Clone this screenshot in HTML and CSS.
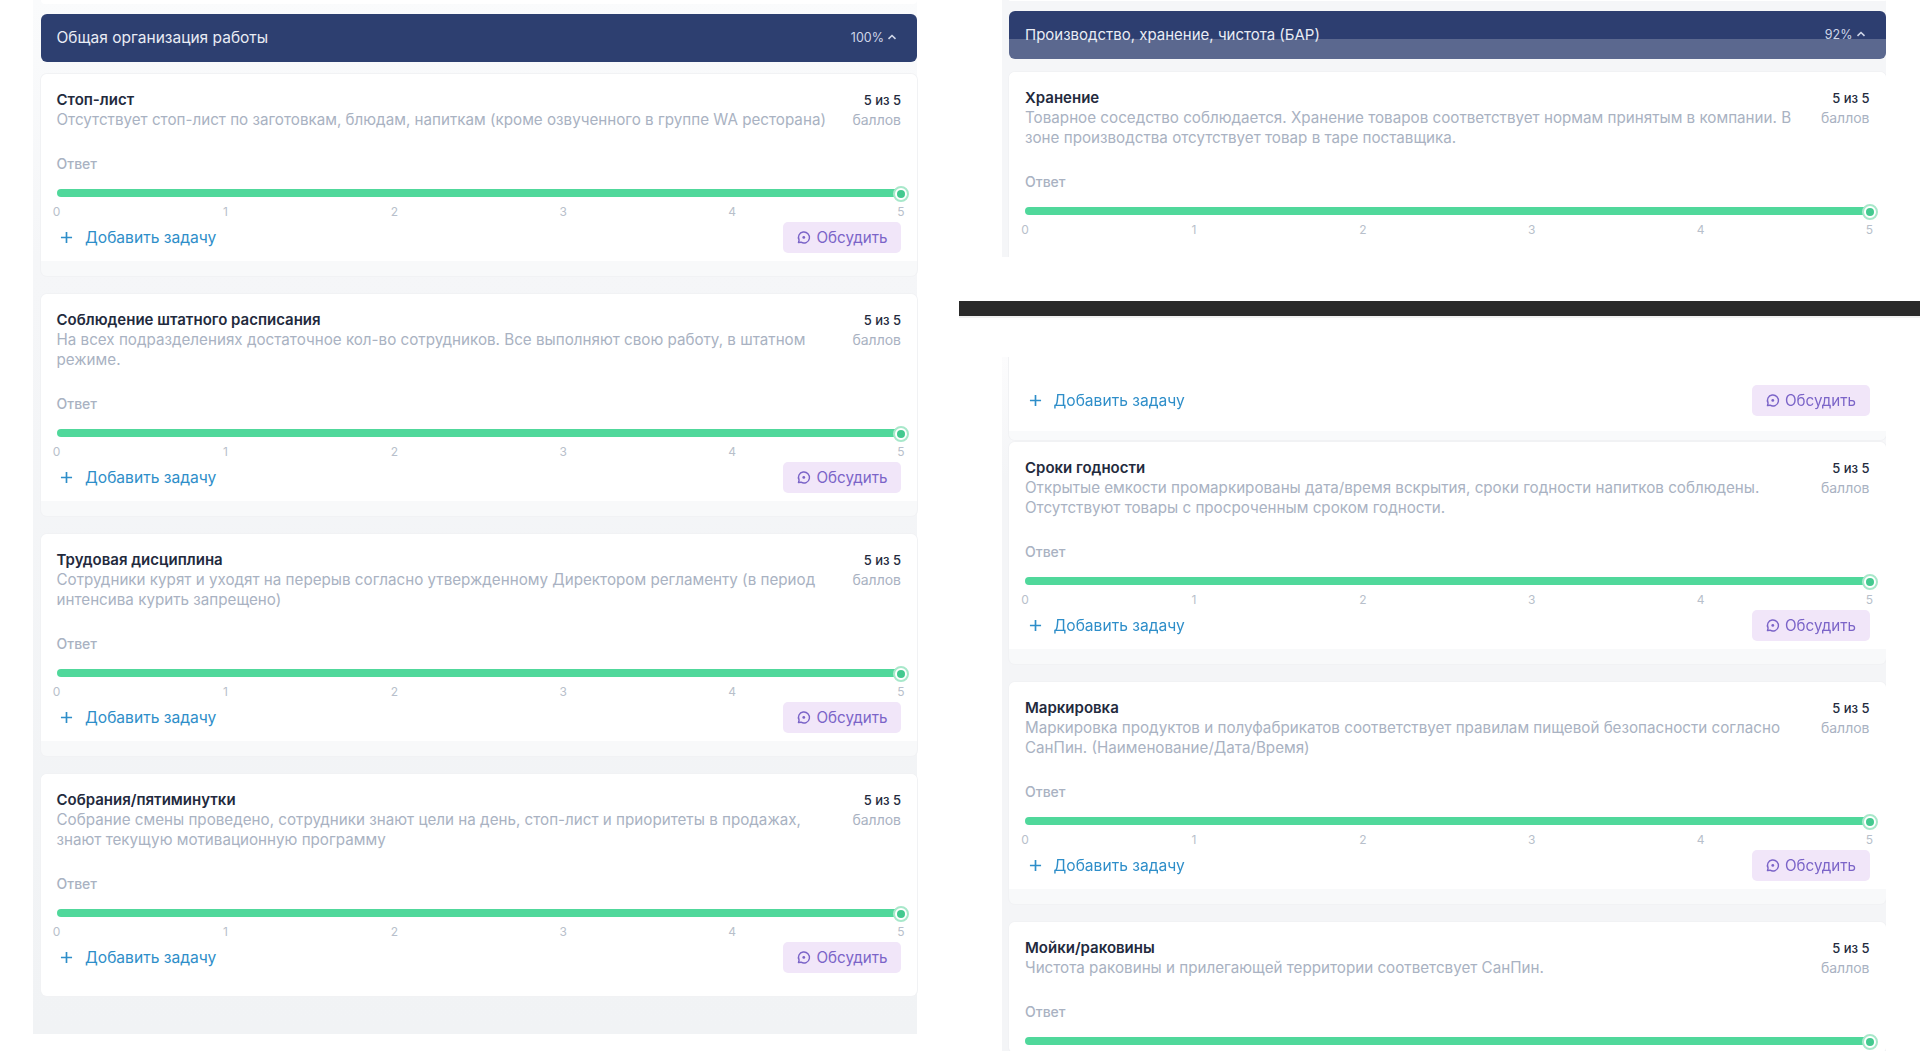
FILE: index.html
```html
<!DOCTYPE html>
<html lang="ru">
<head>
<meta charset="utf-8">
<title>Чек-лист</title>
<link rel="stylesheet" href="styles.css">
</head>
<body>
<svg class="defs" width="0" height="0" aria-hidden="true">
  <symbol id="chat" viewBox="0 0 16 16">
    <path d="M2.6 13.4l.7-2.6A5.9 5.9 0 1 1 5.4 13z" fill="none" stroke="currentColor" stroke-width="1.5" stroke-linejoin="round"/>
    <circle cx="8.3" cy="7.9" r="1.5" fill="currentColor"/>
  </symbol>
  <symbol id="plus" viewBox="0 0 14 14">
    <path d="M7 1v12M1 7h12" fill="none" stroke="currentColor" stroke-width="1.8"/>
  </symbol>
  <symbol id="chev" viewBox="0 0 10 6">
    <path d="M1.5 4.8L5 1.5l3.5 3.3" fill="none" stroke="currentColor" stroke-width="1.6"/>
  </symbol>
</svg>
<main class="page">
  <section class="col">
    <div class="panel panel-left">
      <div class="tail tail-left"></div>
      <header class="head">
        <span>Общая организация работы</span>
        <span class="pct">100% <svg class="chev"><use href="#chev"/></svg></span>
      </header>
      <div class="cards">
        <article class="card">
          <div class="body">
            <div class="top">
              <div class="info"><h3>Стоп-лист</h3><p>Отсутствует стоп-лист по заготовкам, блюдам, напиткам (кроме озвученного в группе WA ресторана)</p></div>
              <div class="score"><b>5 из 5</b><span>баллов</span></div>
            </div>
            <div class="answer">Ответ</div>
            <div class="bar"><i class="knob"></i></div>
            <div class="ticks"><span>0</span><span>1</span><span>2</span><span>3</span><span>4</span><span>5</span></div>
            <div class="actions"><a class="add"><svg class="plus"><use href="#plus"/></svg>Добавить задачу</a><a class="talk"><svg class="chat"><use href="#chat"/></svg>Обсудить</a></div>
          </div>
          <div class="foot"></div>
        </article>
        <article class="card">
          <div class="body">
            <div class="top">
              <div class="info"><h3>Соблюдение штатного расписания</h3><p>На всех подразделениях достаточное кол-во сотрудников. Все выполняют свою работу, в штатном режиме.</p></div>
              <div class="score"><b>5 из 5</b><span>баллов</span></div>
            </div>
            <div class="answer">Ответ</div>
            <div class="bar"><i class="knob"></i></div>
            <div class="ticks"><span>0</span><span>1</span><span>2</span><span>3</span><span>4</span><span>5</span></div>
            <div class="actions"><a class="add"><svg class="plus"><use href="#plus"/></svg>Добавить задачу</a><a class="talk"><svg class="chat"><use href="#chat"/></svg>Обсудить</a></div>
          </div>
          <div class="foot"></div>
        </article>
        <article class="card">
          <div class="body">
            <div class="top">
              <div class="info"><h3>Трудовая дисциплина</h3><p>Сотрудники курят и уходят на перерыв согласно утвержденному Директором регламенту (в период интенсива курить запрещено)</p></div>
              <div class="score"><b>5 из 5</b><span>баллов</span></div>
            </div>
            <div class="answer">Ответ</div>
            <div class="bar"><i class="knob"></i></div>
            <div class="ticks"><span>0</span><span>1</span><span>2</span><span>3</span><span>4</span><span>5</span></div>
            <div class="actions"><a class="add"><svg class="plus"><use href="#plus"/></svg>Добавить задачу</a><a class="talk"><svg class="chat"><use href="#chat"/></svg>Обсудить</a></div>
          </div>
          <div class="foot"></div>
        </article>
        <article class="card card-last">
          <div class="body">
            <div class="top">
              <div class="info"><h3>Собрания/пятиминутки</h3><p>Собрание смены проведено, сотрудники знают цели на день, стоп-лист и приоритеты в продажах, знают текущую мотивационную программу</p></div>
              <div class="score"><b>5 из 5</b><span>баллов</span></div>
            </div>
            <div class="answer">Ответ</div>
            <div class="bar"><i class="knob"></i></div>
            <div class="ticks"><span>0</span><span>1</span><span>2</span><span>3</span><span>4</span><span>5</span></div>
            <div class="actions"><a class="add"><svg class="plus"><use href="#plus"/></svg>Добавить задачу</a><a class="talk"><svg class="chat"><use href="#chat"/></svg>Обсудить</a></div>
          </div>
          <div class="foot"></div>
        </article>
      </div>
    </div>
  </section>

  <section class="col col-right">
    <div class="panel panel-clip-top">
      <div class="tail tail-right"></div>
      <header class="head head-split">
        <span>Производство, хранение, чистота (БАР)</span>
        <span class="pct">92% <svg class="chev"><use href="#chev"/></svg></span>
      </header>
      <div class="cards cards-open">
        <article class="card card-open">
          <div class="body">
            <div class="top">
              <div class="info"><h3>Хранение</h3><p>Товарное соседство соблюдается. Хранение товаров соответствует нормам принятым в компании. В зоне производства отсутствует товар в таре поставщика.</p></div>
              <div class="score"><b>5 из 5</b><span>баллов</span></div>
            </div>
            <div class="answer">Ответ</div>
            <div class="bar"><i class="knob"></i></div>
            <div class="ticks"><span>0</span><span>1</span><span>2</span><span>3</span><span>4</span><span>5</span></div>
          </div>
        </article>
      </div>
    </div>
    <div class="divider"></div>
    <div class="panel panel-clip-bottom">
      <div class="cards">
        <article class="card card-rest">
          <div class="body body-rest">
            <div class="actions"><a class="add"><svg class="plus"><use href="#plus"/></svg>Добавить задачу</a><a class="talk"><svg class="chat"><use href="#chat"/></svg>Обсудить</a></div>
          </div>
        </article>
        <article class="card card-tight">
          <div class="body">
            <div class="top">
              <div class="info"><h3>Сроки годности</h3><p>Открытые емкости промаркированы дата/время вскрытия, сроки годности напитков соблюдены. Отсутствуют товары с просроченным сроком годности.</p></div>
              <div class="score"><b>5 из 5</b><span>баллов</span></div>
            </div>
            <div class="answer">Ответ</div>
            <div class="bar"><i class="knob"></i></div>
            <div class="ticks"><span>0</span><span>1</span><span>2</span><span>3</span><span>4</span><span>5</span></div>
            <div class="actions"><a class="add"><svg class="plus"><use href="#plus"/></svg>Добавить задачу</a><a class="talk"><svg class="chat"><use href="#chat"/></svg>Обсудить</a></div>
          </div>
          <div class="foot"></div>
        </article>
        <article class="card">
          <div class="body">
            <div class="top">
              <div class="info"><h3>Маркировка</h3><p>Маркировка продуктов и полуфабрикатов соответствует правилам пищевой безопасности согласно СанПин. (Наименование/Дата/Время)</p></div>
              <div class="score"><b>5 из 5</b><span>баллов</span></div>
            </div>
            <div class="answer">Ответ</div>
            <div class="bar"><i class="knob"></i></div>
            <div class="ticks"><span>0</span><span>1</span><span>2</span><span>3</span><span>4</span><span>5</span></div>
            <div class="actions"><a class="add"><svg class="plus"><use href="#plus"/></svg>Добавить задачу</a><a class="talk"><svg class="chat"><use href="#chat"/></svg>Обсудить</a></div>
          </div>
          <div class="foot"></div>
        </article>
        <article class="card">
          <div class="body">
            <div class="top">
              <div class="info"><h3>Мойки/раковины</h3><p>Чистота раковины и прилегающей территории соответсвует СанПин.</p></div>
              <div class="score"><b>5 из 5</b><span>баллов</span></div>
            </div>
            <div class="answer">Ответ</div>
            <div class="bar"><i class="knob"></i></div>
          </div>
        </article>
      </div>
    </div>
  </section>
</main>
</body>
</html>
```
FILE: styles.css
```css
* { box-sizing: border-box; }
html, body { margin: 0; height: 1051px; overflow: hidden; background: #fff; }
body { font-family: Inter, "Noto Sans", sans-serif; color: #232a3d; }
.defs { position: absolute; }

.page { display: grid; grid-template-columns: 959px 961px; height: 1051px; filter: blur(0.35px); }
.col { min-width: 0; }
.col:first-child { padding-left: 33px; }
.col-right { display: flex; flex-direction: column; }

.panel { width: 884px; padding-left: 7.5px; background: #f5f6f8; }
.panel-left { height: 1034px; background: linear-gradient(#fafbfc 0, #f5f6f8 260px, #f1f3f5 100%); }
.panel-clip-top { margin-left: 42.5px; height: 257px; overflow: hidden; }
.panel-clip-bottom { margin-left: 42.5px; flex: 1; min-height: 0; overflow: hidden; background: linear-gradient(#fcfcfd 0, #f4f5f7 120px); }

.tail { background: #fff; border-radius: 0 0 6px 6px; }
.tail-left { height: 4px; margin-bottom: 9.5px; }
.tail-right { height: 1px; margin-bottom: 9.5px; }

.divider { height: 17px; margin: 44px 0 39px; background: #2a2a2a; border-bottom: 2px solid #f0f0f0; }

.head {
  display: flex; justify-content: space-between; align-items: center;
  height: 48px; padding: 0 20px 0 16px; border-radius: 6px;
  background: #2d3f70; color: #e9ecf4; font-size: 15.5px;
}
.head-split { background: linear-gradient(#2d3e70 0 28px, #5b688f 28px); font-size: 15px; }
.pct { display: flex; align-items: center; gap: 3px; font-size: 12.5px; color: #cfd6e8; }
.chev { width: 10px; height: 6px; margin-bottom: 2px; }

.cards { display: flex; flex-direction: column; gap: 18px; padding-top: 12px; }
.cards-open { padding-top: 13px; }
.panel-clip-bottom .cards { padding-top: 0; }

.card { background: #f8f9fa; border-radius: 6px; box-shadow: 0 0 0 1px #f1f2f4; overflow: hidden; }
.card-last { background: #fff; }
.card-open { background: #fff; height: 220px; }
.card-rest { height: 83px; background: linear-gradient(#fff 0 74px, #f9fafb 74px); border-radius: 0 0 6px 6px; }
.card-tight { margin-top: -16px; }

.body { padding: 16px 16px 8px; background: #fff; position: relative; }
.body-rest { padding: 0 16px; background: transparent; padding-top: 28px; }
.foot { height: 15px; }

.top { display: flex; justify-content: space-between; gap: 20px; }
.info { flex: 1; min-width: 0; }
h3 { margin: 0; font-size: 15px; line-height: 20px; font-weight: 600; color: #232a3d; }
p { margin: 0; font-size: 15.2px; line-height: 20px; color: #a9b2c2; }
.score { display: flex; flex-direction: column; align-items: flex-end; flex: none; width: 49px; font-size: 14px; line-height: 20px; white-space: nowrap; }
.score b { font-size: 13px; font-weight: 500; color: #232a3d; }
.score span { color: #a9b2c2; }

.answer { margin-top: 24px; font-size: 14px; line-height: 20px; font-weight: 500; color: #a9b2c2; }

.bar { position: relative; height: 8px; margin-top: 15px; border-radius: 4px; background: #50d89b; }
.knob {
  position: absolute; right: -8px; top: -3px; width: 16px; height: 16px;
  border-radius: 50%; border: 2px solid #a8e8ca; background: #fff;
}
.knob::after { content: ""; position: absolute; left: 2px; top: 2px; width: 8px; height: 8px; border-radius: 50%; background: #43c98f; }

.ticks { display: flex; justify-content: space-between; height: 18px; margin-top: 7px; font-size: 12px; line-height: 16px; color: #b8bfcb; }
.ticks span { width: 0; display: flex; justify-content: center; }

.actions { display: flex; justify-content: space-between; align-items: center; height: 31px; }
.add { display: flex; align-items: center; padding-left: 3.5px; font-size: 15.6px; color: #2e8ec9; }
.plus { width: 13px; height: 13px; margin-right: 12px; }
.talk {
  display: flex; align-items: center; gap: 5px; height: 31px; width: 118px; justify-content: center;
  border-radius: 5px; background: #f1e6f9; color: #7b64c8; font-size: 15.2px;
}
.chat { width: 15px; height: 15px; }
```
